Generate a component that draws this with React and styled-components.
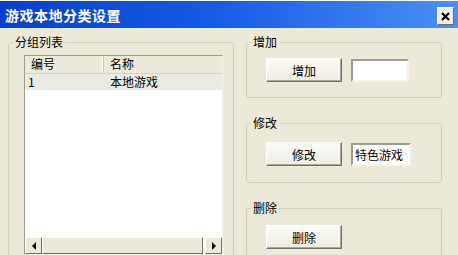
import styled, { createGlobalStyle } from "styled-components";

const Global = createGlobalStyle`
  html, body { margin: 0; padding: 0; background: #ece9d8; }
  body { font-family: "Noto Sans CJK SC", "Noto Sans", sans-serif; font-size: 12px; color: #000; }
`;

const Window = styled.div`
  width: 458px;
  height: 255px;
  overflow: hidden;
  background: #ece9d8;
  display: flex;
  flex-direction: column;
`;

const TitleBar = styled.div`
  height: 28px;
  flex: none;
  box-sizing: border-box;
  border-top: 1px solid #f4f7ff;
  background: linear-gradient(90deg, #0a3fcc 0%, #1659e2 45%, #4a90f4 100%);
  display: flex;
  align-items: center;
  justify-content: space-between;
  padding: 0 4px 0 5px;
`;

const Title = styled.span`
  color: #fff;
  font-weight: bold;
  font-size: 14px;
  letter-spacing: 0.5px;
`;

const CloseButton = styled.div`
  width: 17px;
  height: 18px;
  box-sizing: border-box;
  background: #f1efe2;
  border: 1px solid;
  border-color: #fff #716f64 #716f64 #fff;
  display: flex;
  align-items: center;
  justify-content: center;
  margin-top: 3px;
`;

const Body = styled.div`
  flex: 1;
  display: flex;
  gap: 12px;
  padding: 7px 0 0 8px;
  min-height: 0;
`;

const Group = styled.fieldset`
  margin: 0;
  box-sizing: border-box;
  border: 1px solid #d0d0bf;
  border-radius: 3px;
  padding: ${(p) => p.$pad || "9px 15px 15px 19px"};
  width: ${(p) => p.$w}px;
  min-width: 0;
`;

const Legend = styled.legend`
  padding: 0 2px;
  margin-left: ${(p) => p.$shift || -15}px;
  font-size: 12px;
  line-height: 14px;
`;

const LeftGroup = styled(Group)`
  height: 260px;
`;

const RightColumn = styled.div`
  display: flex;
  flex-direction: column;
  gap: 18px;
`;

const ListView = styled.div`
  width: 199px;
  height: 200px;
  box-sizing: border-box;
  border: 1px solid;
  border-color: #9d9d92 #f4f4ef #f4f4ef #9d9d92;
  background: #fff;
  display: flex;
  flex-direction: column;
  margin-left: -1px;
`;

const HeaderRow = styled.div`
  display: grid;
  grid-template-columns: 79px 1fr;
  height: 17px;
  background: #ebeadb;
  border-bottom: 1px solid #d6d2c2;
`;

const HeaderCell = styled.div`
  padding-left: 6px;
  line-height: 16px;
  border-right: 1px solid #c7c5b2;
  box-shadow: inset -1px 0 #fff;
  &:last-child { border-right: none; box-shadow: none; }
`;

const Row = styled.div`
  display: grid;
  grid-template-columns: 79px 1fr;
  height: 16px;
  line-height: 16px;
  background: ${(p) => (p.$selected ? "#ecebe3" : "#fff")};
`;

const Cell = styled.div`
  padding-left: ${(p) => (p.$first ? 3 : 6)}px;
`;

const ListBody = styled.div`
  flex: 1;
`;

const ScrollBar = styled.div`
  height: 17px;
  display: flex;
  background: #fbfbf7;
`;

const ScrollBtn = styled.div`
  width: 17px;
  box-sizing: border-box;
  background: #ece9d8;
  border: 1px solid;
  border-color: #fff #716f64 #716f64 #fff;
  display: flex;
  align-items: center;
  justify-content: center;
`;

const Thumb = styled.div`
  flex: 1;
  box-sizing: border-box;
  background: #ece9d8;
  border: 1px solid;
  border-color: #fff #716f64 #716f64 #fff;
  margin-right: 2px;
`;

const Arrow = styled.span`
  width: 0;
  height: 0;
  border-top: 4px solid transparent;
  border-bottom: 4px solid transparent;
  ${(p) => (p.$dir === "left" ? "border-right: 4px solid #000;" : "border-left: 4px solid #000;")}
`;

const Line = styled.div`
  display: flex;
  align-items: center;
  gap: 9px;
`;

const Button = styled.div`
  width: 76px;
  height: 24px;
  box-sizing: border-box;
  background: linear-gradient(#fbfbf8, #efede2);
  border: 1px solid;
  border-color: #fff #716f64 #716f64 #fff;
  box-shadow: inset -1px -1px #aca899;
  display: flex;
  align-items: center;
  justify-content: center;
  font-size: 12px;
`;

const TextBox = styled.div`
  width: ${(p) => p.$w || 58}px;
  height: 23px;
  box-sizing: border-box;
  background: #fff;
  border: 2px solid;
  border-color: #9d9d92 #f4f4ef #f4f4ef #9d9d92;
  padding-left: 2px;
  line-height: 19px;
  font-size: 12px;
`;

const App = () => {
  return (
    <Window>
      <Global />
      <TitleBar>
        <Title>游戏本地分类设置</Title>
        <CloseButton>
          <svg width="9" height="9" viewBox="0 0 9 9">
            <path d="M1 1 L8 8 M8 1 L1 8" stroke="#000" strokeWidth="2.2" />
          </svg>
        </CloseButton>
      </TitleBar>
      <Body>
        <LeftGroup $w={226} $pad="6px 11px 0 16px">
          <Legend $shift={-12}>分组列表</Legend>
          <ListView>
            <HeaderRow>
              <HeaderCell>编号</HeaderCell>
              <HeaderCell>名称</HeaderCell>
            </HeaderRow>
            <ListBody>
              <Row $selected>
                <Cell $first>1</Cell>
                <Cell>本地游戏</Cell>
              </Row>
            </ListBody>
            <ScrollBar>
              <ScrollBtn><Arrow $dir="left" /></ScrollBtn>
              <Thumb />
              <ScrollBtn><Arrow $dir="right" /></ScrollBtn>
            </ScrollBar>
          </ListView>
        </LeftGroup>
        <RightColumn>
          <Group $w={196} $pad="9px 15px 15px 19px">
            <Legend>增加</Legend>
            <Line>
              <Button>增加</Button>
              <TextBox />
            </Line>
          </Group>
          <Group $w={196} $pad="12px 15px 16px 19px">
            <Legend>修改</Legend>
            <Line>
              <Button>修改</Button>
              <TextBox $w={60}>特色游戏</TextBox>
            </Line>
          </Group>
          <Group $w={196} $pad="10px 15px 20px 19px">
            <Legend>删除</Legend>
            <Line>
              <Button>删除</Button>
            </Line>
          </Group>
        </RightColumn>
      </Body>
    </Window>
  );
};

export default App;
